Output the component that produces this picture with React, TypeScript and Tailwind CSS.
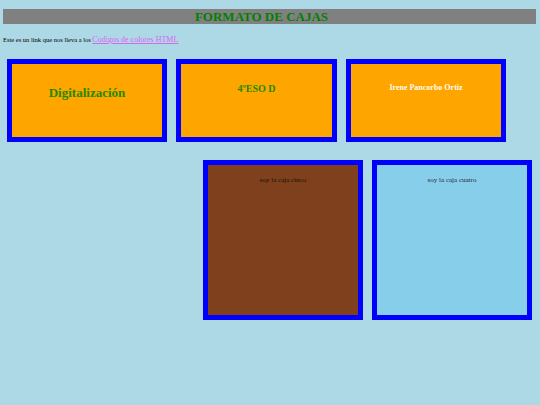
export default function App() {
  return (
    <div className="min-h-[405px] w-full bg-[#add8e6] pt-[9px] font-['Liberation_Serif',serif] text-black">
      {/* title bar */}
      <div className="ml-[3px] mr-[4px] flex h-[15px] items-center justify-center bg-[#808080] pr-[16px]">
        <h1 className="text-[13px] font-bold leading-none text-[#008000]">FORMATO DE CAJAS</h1>
      </div>

      <p className="ml-[3px] mt-[11px] flex h-[10px] items-center whitespace-pre text-[6.5px] leading-none">
        Este es un link que nos lleva a los{" "}
        <a href="#" className="text-[8px] text-[#d966ee] underline">
          Codigos de colores HTML
        </a>
      </p>

      {/* first row */}
      <div className="mt-[14px] flex gap-[9px] pl-[7px]">
        <div className="h-[83px] w-[160px] border-[5px] border-[#0000ff] bg-[#ffa500] pt-[21px] text-center">
          <h2 className="text-[13px] font-bold leading-[15px] text-[#228b00]">Digitalización</h2>
        </div>
        <div className="h-[83px] w-[161px] border-[5px] border-[#0000ff] bg-[#ffa500] pt-[19px] text-center">
          <h3 className="text-[10px] font-bold leading-[12px] text-[#228b00]">4ºESO D</h3>
        </div>
        <div className="h-[83px] w-[160px] border-[5px] border-[#0000ff] bg-[#ffa500] pt-[19px] text-center">
          <h4 className="text-[8px] font-bold leading-[10px] text-[#fffbea]">Irene Pancorbo Ortiz</h4>
        </div>
      </div>

      {/* second row */}
      <div className="mt-[18px] flex justify-end gap-[9px] pr-[8px]">
        <div className="h-[160px] w-[160px] border-[5px] border-[#0000ff] bg-[#7f401e] pt-[11px] text-center">
          <p className="text-[7px] leading-[9px] text-[#1a0d05]">soy la caja cinco</p>
        </div>
        <div className="h-[160px] w-[160px] border-[5px] border-[#0000ff] bg-[#87ceeb] pt-[11px] text-center">
          <p className="text-[7px] leading-[9px] text-[#1c2a30]">soy la caja cuatro</p>
        </div>
      </div>
    </div>
  );
}
